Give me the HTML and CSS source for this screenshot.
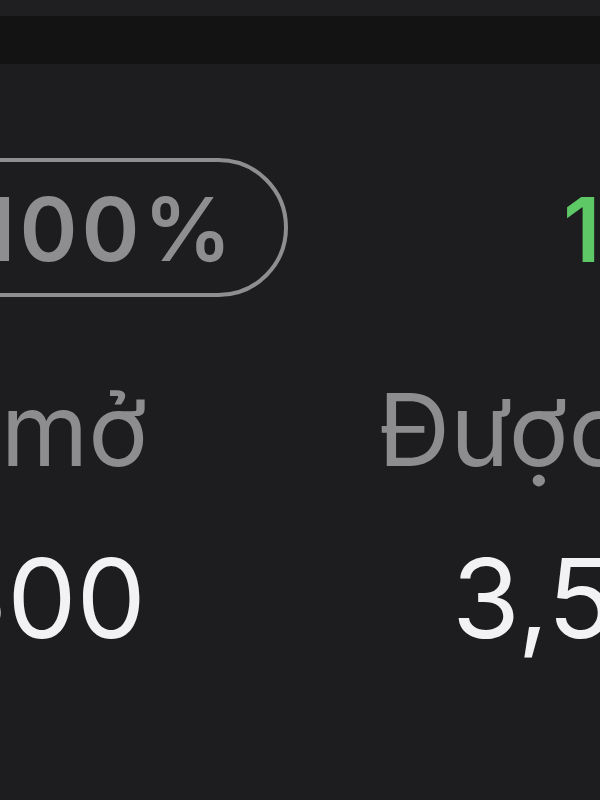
FILE: index.html
```html
<!DOCTYPE html>
<html lang="vi">
<head>
  <meta charset="UTF-8">
  <meta name="viewport" content="width=device-width, initial-scale=1.0">
  <title>Giá</title>
  <link rel="stylesheet" href="styles.css">
</head>
<body>
  <div class="topbar"></div>
  <div class="divider"></div>
  <div class="main">
    <div class="row row-head">
      <div class="cell-left">
        <span class="pill">100%</span>
      </div>
      <div class="cell-right">
        <span class="change">1</span>
      </div>
    </div>
    <div class="row row-label">
      <div class="cell-left">Giá mở</div>
      <div class="cell-right">Được bán</div>
    </div>
    <div class="row row-value">
      <div class="cell-left">1,500</div>
      <div class="cell-right">3,500</div>
    </div>
  </div>
</body>
</html>
```

FILE: styles.css
```css
html, body {
  margin: 0;
  background: #1d1d1f;
  overflow: hidden;
}

body {
  width: 600px;
  height: 800px;
  font-family: Inter, "Noto Sans", sans-serif;
}

.topbar {
  height: 16px;
  background: #1f1f21;
}

.divider {
  height: 48px;
  background: #141314;
}

.main {
  padding-top: 94px;
}

.row {
  display: flex;
  white-space: nowrap;
}

.cell-left {
  flex: none;
  display: flex;
  justify-content: flex-end;
}

.cell-right {
  flex: none;
}

/* badge row */
.row-head .cell-left {
  width: 288px;
}
.pill {
  display: block;
  box-sizing: border-box;
  height: 139px;
  padding: 23px 48px 19px 120px;
  border: 4px solid #8e8e91;
  border-radius: 70px;
  color: #8e8e91;
  font-size: 88px;
  font-weight: 600;
  letter-spacing: 4px;
  line-height: 89px;
}
.row-head .cell-right {
  padding-left: 275px;
  padding-top: 27px;
}
.change {
  color: #5ec766;
  font-size: 89px;
  font-weight: 600;
  line-height: 89px;
}

/* labels */
.row-label {
  margin-top: 83px;
  color: #8d8d90;
  font-size: 100px;
  line-height: 100px;
}
.row-label .cell-left {
  width: 148px;
}
.row-label .cell-right {
  padding-left: 230px;
}

/* values */
.row-value {
  margin-top: 63px;
  color: #f2f2f4;
  font-size: 110px;
  line-height: 110px;
}
.row-value .cell-left {
  width: 146px;
}
.row-value .cell-right {
  padding-left: 306px;
}
```
